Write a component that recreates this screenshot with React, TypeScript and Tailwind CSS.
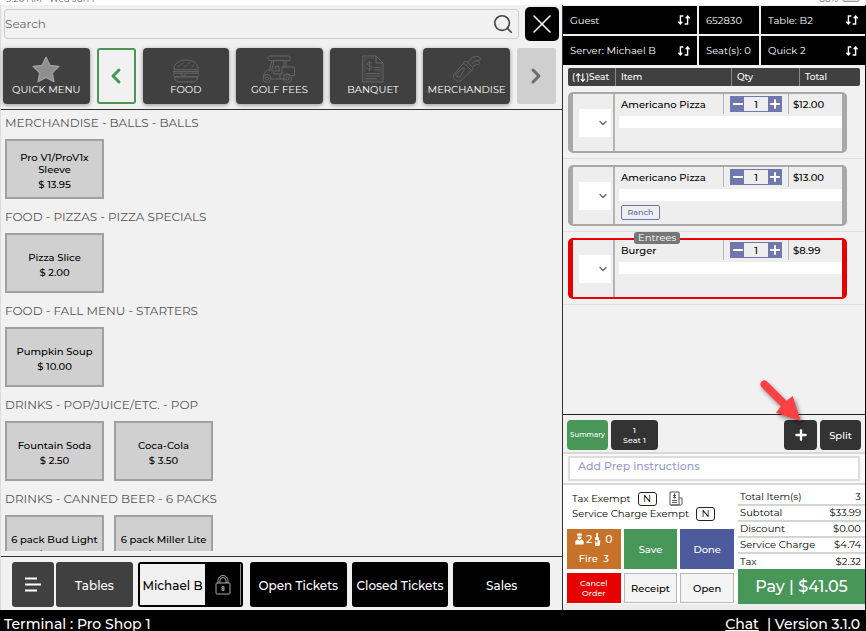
import type { ReactNode } from "react";
import { ArrowUpDown, ChevronDown, ChevronLeft, ChevronRight, Minus, Plus, Search, X } from "lucide-react";

/* ---------- icons ---------- */

function SwapIcon() {
  return (
    <svg viewBox="0 0 12 10" className="h-[10px] w-3 shrink-0" fill="none" stroke="currentColor" strokeWidth="1.4" aria-hidden="true">
      <path d="M5.4 1H2.4V9M.5 6.8l1.9 2.1 1.9-2.1M6.6 9h3V1M7.7 3.2l1.9-2.1 1.9 2.1" />
    </svg>
  );
}

function StarIcon() {
  return (
    <svg viewBox="0 0 28 27" className="h-[27px] w-7" aria-hidden="true">
      <path
        d="M14 1.2l3.8 8.2 9 1.1-6.6 6.2 1.7 8.9L14 21.3l-7.9 4.3 1.7-8.9L1.2 10.5l9-1.1z"
        fill="#8e8e8e"
        stroke="#a0a0a0"
        strokeWidth="1.4"
        strokeLinejoin="round"
      />
    </svg>
  );
}

function BurgerIcon() {
  return (
    <svg viewBox="0 0 28 24" className="h-6 w-7" fill="none" stroke="#646464" strokeWidth="1" strokeLinecap="round" strokeLinejoin="round" aria-hidden="true">
      <path d="M2 9.6C2 4.400 7 1 14 1s12 3.400 12 8.600c0 .7-.4 1-1 1H3c-.6 0-1-.3-1-1z" />
      <path d="M6.500 7.600l1.600-1.600M10 5.200l1.600-1.600M12.500 8l1.600-1.600M16 5.200l1.600-1.600M20 7.800l1.600-1.600" />
      <path d="M3 10.800c-2.200.6-2.200 3.200 0 3.400h22c2.200-.2 2.200-2.800 0-3.400M2.500 12.500h23" />
      <path d="M2.500 14.400c-1.800.8-1.400 3 .3 3.200h22.400c1.700-.2 2.100-2.400.3-3.200M8 14.400l3.500 2.800 3.500-2.800" />
      <path d="M2.500 18h23c.2 3-1.500 4.800-4.300 4.800H6.800c-2.800 0-4.500-1.800-4.300-4.800z" />
    </svg>
  );
}

function GolfCartIcon() {
  return (
    <svg viewBox="0 0 34 28" className="h-7 w-[34px]" fill="none" stroke="#646464" strokeWidth="1" strokeLinecap="round" strokeLinejoin="round" aria-hidden="true">
      <path d="M8 1h18c1.400 0 2 .8 2 2v2.500h-6M8 1C6.500 1 6 2 6 3.200S6.800 5.500 8 5.500h14" />
      <path d="M10 5.500L7.500 15M12 5.500L10 14M22 5.500v6.500M24 5.500v6.500" />
      <path d="M20 12h12.500v8.500h-3M20 12v7h-8l-1.500-4H7c-3.500.4-5 3-5.500 7M14 14l-1-2.500 3.500-.5M16.500 11l1 5h-5M9 24h14M18 19v5M21.500 20.500c1-2 5-2.500 7 0" />
      <circle cx="5" cy="23.500" r="4" />
      <circle cx="5" cy="23.500" r="1.600" />
      <circle cx="25.500" cy="23.500" r="4" />
      <circle cx="25.500" cy="23.500" r="1.600" />
    </svg>
  );
}

function InvoiceIcon() {
  return (
    <svg viewBox="0 0 22 28" className="h-7 w-[22px]" fill="none" stroke="#646464" strokeWidth="1" strokeLinecap="round" strokeLinejoin="round" aria-hidden="true">
      <path d="M1 1h13l7 7v19H1zM14 1v7h7" />
      <path d="M3 3h9M3 3v22h16V11" strokeOpacity="0.5" />
      <path d="M10 8c-3-1.600-5-.6-4.600 1.200.5 1.800 4.600 1.300 4.700 3.300.1 1.800-2.500 2.300-4.900 1M7.600 5.800v10M12.500 12.500h5M12.500 15h5M4.500 18.500h13M4.500 21h13M4.500 23.500h10" />
    </svg>
  );
}

function GolfBagIcon() {
  return (
    <svg viewBox="0 0 30 28" className="h-7 w-[30px]" fill="none" stroke="#646464" strokeWidth="1" strokeLinecap="round" strokeLinejoin="round" aria-hidden="true">
      <path d="M12 8.500l7.500 7L9 25.500c-1.200 1.200-3.400 1.200-5 0l-2-2c-1-1.400-1-3 0-4.400z" />
      <path d="M11 7.500c1-1.500 3-1.500 4.500-.2l4.500 4.200c1.400 1.400 1.200 3-.2 4M5 18l6-5.500 1.500 1.500-5 8.500-3.500-2z" />
      <path d="M16 7.500l3-3.500c.3-1.800 1.800-2.600 3.200-1.800M20.500 8.500l2-2.300M22 2.500c1.500-1.500 4-1.500 5-.5 1.500.6 1.600 2.400.4 3.200-1.400 1-3.400.4-4.900 1M21.500 11l3-1.500c1.500.6 3-.4 3-1.800 0-1-.8-1.500-1.500-1.700" />
    </svg>
  );
}

function MenuIcon() {
  return (
    <svg viewBox="0 0 16 15" className="h-[15px] w-4" stroke="#fff" strokeWidth="1.800" aria-hidden="true">
      <path d="M0 1.500h12M0 7.500h16M0 13.500h12" />
    </svg>
  );
}

function LockIcon() {
  return (
    <svg viewBox="0 0 16 20" className="h-5 w-4" fill="none" stroke="#a8a8a8" strokeWidth="1" aria-hidden="true">
      <rect x="1" y="8" width="14" height="11" rx="1" />
      <path d="M3 8V5.500a5 5 0 0110 0V8M5 8V5.500a3 3 0 016 0V8M7 11.500h2v4H7zM7 13.500h2" />
    </svg>
  );
}

function ReceiptIcon() {
  return (
    <svg viewBox="0 0 14 15" className="h-[15px] w-[14px]" fill="none" stroke="#555" strokeWidth="1" aria-hidden="true">
      <path d="M1 1h9v13H1zM10 7h3v6c0 1-1 1-1.500 1H2M5.500 2.500v5M4 4.500h3M4 6.500h3M3 9.500h5M3 11.500h5" />
    </svg>
  );
}

function ChefIcon() {
  return (
    <svg viewBox="0 0 9 12" className="h-3 w-[9px]" fill="#fff" aria-hidden="true">
      <path d="M2 .8Q4.500-.4 7 .8L6.700 2.800H2.300zM2.500 3.400h4v1.200a2 2 0 01-4 0zM.3 11.600V9c0-1.600 1-2.200 2.400-2.400l1.800 1.200 1.800-1.200C7.700 6.800 8.700 7.400 8.700 9v2.600z" />
    </svg>
  );
}

function BottleIcon() {
  return (
    <svg viewBox="0 0 7 13" className="h-[13px] w-[7px]" aria-hidden="true">
      <path d="M2.200 0h1.800v3.500l1 1.500v8H1V5l1.200-1.500z" fill="#fff" />
      <path d="M4 7.500h2.500L6 10.500v2h-1.500z" fill="#fff" />
      <path d="M1.500 7h2v2.500h-2z" fill="#c77129" />
    </svg>
  );
}

function PointerArrow() {
  return (
    <svg
      viewBox="0 0 50 50"
      className="pointer-events-none absolute -top-[42px] -left-[26px] z-10 h-[50px] w-[50px] drop-shadow-[2px_3px_2px_rgba(0,0,0,0.45)]"
      aria-hidden="true"
    >
      <path d="M3.200 8.800a4 4 0 015.600-5.600L28.500 22.700 34.700 18 42.700 43 18 34.700l4.900-6.400z" fill="#fb4143" />
    </svg>
  );
}

/* ---------- data ---------- */

const categories: { label: string; icon: ReactNode }[] = [
  { label: "FOOD", icon: <BurgerIcon /> },
  { label: "GOLF FEES", icon: <GolfCartIcon /> },
  { label: "BANQUET", icon: <InvoiceIcon /> },
  { label: "MERCHANDISE", icon: <GolfBagIcon /> },
];

const sections = [
  { title: "MERCHANDISE - BALLS - BALLS", items: [{ name: "Pro V1/ProV1x Sleeve", price: "$ 13.95" }] },
  { title: "FOOD - PIZZAS - PIZZA SPECIALS", items: [{ name: "Pizza Slice", price: "$ 2.00" }] },
  { title: "FOOD - FALL MENU - STARTERS", items: [{ name: "Pumpkin Soup", price: "$ 10.00" }] },
  {
    title: "DRINKS - POP/JUICE/ETC. - POP",
    items: [
      { name: "Fountain Soda", price: "$ 2.50" },
      { name: "Coca-Cola", price: "$ 3.50" },
    ],
  },
  {
    title: "DRINKS - CANNED BEER - 6 PACKS",
    items: [
      { name: "6 pack Bud Light", price: "$ 31.50" },
      { name: "6 pack Miller Lite", price: "$ 31.50" },
    ],
  },
];

type Line = { name: string; total: string; modifier?: string; course?: string; selected?: boolean };

const lines: Line[] = [
  { name: "Americano Pizza", total: "$12.00" },
  { name: "Americano Pizza", total: "$13.00", modifier: "Ranch" },
  { name: "Burger", total: "$8.99", course: "Entrees", selected: true },
];

const totals = [
  ["Total Item(s)", "3"],
  ["Subtotal", "$33.99"],
  ["Discount", "$0.00"],
  ["Service Charge", "$4.74"],
  ["Tax", "$2.32"],
];

/* ---------- left side ---------- */

function CategoryButton({ label, icon }: { label: string; icon: ReactNode }) {
  return (
    <button className="flex min-w-0 flex-1 flex-col items-center justify-end rounded-[4px] bg-[#404040] pb-[7px] text-[10px] leading-[14px] text-white shadow-[0_1px_4px_rgba(0,0,0,0.4)]">
      {icon}
      {label}
    </button>
  );
}

function ProductButton({ name, price }: { name: string; price: string }) {
  return (
    <button className="flex h-[60px] w-[99px] flex-col items-center justify-center gap-[3px] border-2 border-[#a0a0a0] bg-[#d0d0d0] pt-1 text-[10px] leading-3 font-medium text-black">
      <span className="max-w-[90px]">{name}</span>
      <span>{price}</span>
    </button>
  );
}

function Catalog() {
  return (
    <main className="flex min-w-0 flex-1 flex-col border-l border-[#dcdcdc] bg-[#f1f1f1]">
      <div className="border-b border-[#333] pb-[5px]">
        <div className="flex items-center gap-[6px] pt-[2px] pr-[3px] pl-[3px]">
          <label className="flex h-[30px] min-w-0 flex-1 items-center rounded-[3px] border border-[#cfcfcf] pr-1">
            <input
              type="text"
              aria-label="Search"
              placeholder="Search"
              className="min-w-0 flex-1 bg-transparent text-[12px] outline-none placeholder:text-[#6a6a6a]"
            />
            <Search className="h-[22px] w-[22px] text-[#444]" strokeWidth={1.8} />
          </label>
          <button aria-label="Close" className="flex h-[34px] w-[34px] items-center justify-center rounded-[5px] bg-black text-white">
            <X className="h-8 w-8" strokeWidth={1.2} />
          </button>
        </div>
        <nav aria-label="Categories" className="mt-[7px] flex h-14 gap-[7px] pr-[6px] pl-[2px]">
          <CategoryButton label="QUICK MENU" icon={<StarIcon />} />
          <button
            aria-label="Previous categories"
            className="flex w-[39px] items-center justify-center rounded-[3px] border-2 border-[#489658] text-[#489658]"
          >
            <ChevronLeft className="h-6 w-6" strokeWidth={3} />
          </button>
          {categories.map((c) => (
            <CategoryButton key={c.label} label={c.label} icon={c.icon} />
          ))}
          <button aria-label="Next categories" className="flex w-[39px] items-center justify-center rounded-[2px] bg-[#cfcfcf] text-[#6c6c6c]">
            <ChevronRight className="h-6 w-6" strokeWidth={3} />
          </button>
        </nav>
      </div>

      <div className="mb-[5px] min-h-0 flex-1 overflow-hidden pl-1">
        {sections.map((s) => (
          <section key={s.title} className="pb-[5px]">
            <h2 className="mb-[3px] text-[12px] leading-[26px] text-[#555]">{s.title}</h2>
            <div className="flex flex-wrap gap-[10px]">
              {s.items.map((i) => (
                <ProductButton key={i.name} name={i.name} price={i.price} />
              ))}
            </div>
          </section>
        ))}
      </div>

      <nav
        aria-label="Terminal"
        className="flex h-[54px] shrink-0 items-center gap-[5px] border-t border-[#333] pt-[2px] pr-3 pl-[11px] text-[12px] font-medium text-white"
      >
        <div className="flex gap-[2px]">
          <button aria-label="Menu" className="flex h-[45px] w-[42px] items-center justify-center rounded-[3px] bg-[#404040]">
            <MenuIcon />
          </button>
          <button className="h-[45px] w-[77px] rounded-[3px] bg-[#404040] pt-[2px]">Tables</button>
        </div>
        <button className="mr-[2px] flex h-[45px] w-[105px] items-stretch rounded-[3px] border-2 border-black bg-black">
          <span className="flex flex-1 items-center justify-center bg-[#f1f1f1] pt-[2px] whitespace-nowrap text-black">Michael B</span>
          <span className="flex w-9 items-center justify-center border-r border-[#888]">
            <LockIcon />
          </span>
        </button>
        <button className="h-[45px] min-w-0 flex-1 rounded-[3px] bg-black pt-[2px] whitespace-nowrap">Open Tickets</button>
        <button className="h-[45px] min-w-0 flex-1 rounded-[3px] bg-black pt-[2px] whitespace-nowrap">Closed Tickets</button>
        <button className="h-[45px] min-w-0 flex-1 rounded-[3px] bg-black pt-[2px]">Sales</button>
      </nav>
    </main>
  );
}

/* ---------- right side ---------- */

function InfoCell({ label, swap }: { label: string; swap?: boolean }) {
  return (
    <button className="flex items-center justify-between bg-black px-[7px] text-left text-[10px] whitespace-nowrap text-white">
      {label}
      {swap && <SwapIcon />}
    </button>
  );
}

function LineRow({ line }: { line: Line }) {
  const tone = line.selected ? "border-[#e60000]" : "border-[#a8a8a8]";
  return (
    <tr className="relative block border-b border-[#dedede] pt-[6px] pr-[18px] pb-[5px] pl-[5px]">
      <td className="block p-0">
        {line.course && (
          <span className="absolute top-0 left-[71px] rounded-[3px] bg-[#767676] px-1 text-[10px] leading-3 text-white">{line.course}</span>
        )}
        <div className={`grid h-[61px] grid-cols-[42px_minmax(0,1fr)_65px_54px] rounded-[5px] border-x-[5px] border-y-2 bg-[#eee] ${tone}`}>
          <div className="flex items-center border-r-2 border-[#b4b4b4] pl-[6px]">
            <label className="relative flex h-7 w-8 items-center">
              <select aria-label={`Seat for ${line.name}`} className="h-7 w-8 appearance-none bg-white">
                <option aria-label="No seat"></option>
              </select>
              <ChevronDown className="pointer-events-none absolute right-[2px] h-3 w-3 text-[#666]" strokeWidth={2.5} />
            </label>
          </div>
          <div className="col-span-3 flex flex-col">
            <div className="grid h-5 grid-cols-[minmax(0,1fr)_65px_54px] items-center text-[10px] font-medium text-black">
              <span className="pl-[6px]">{line.name}</span>
              <span className="flex h-5 items-center border-l border-[#b4b4b4] pl-[6px]">
                <span className="flex h-4 w-[52px] border border-[#7077ad] bg-[#eee]">
                  <button aria-label="Decrease quantity" className="flex w-[13px] items-center justify-center bg-[#7077ad] text-white">
                    <Minus className="h-[14px] w-[14px] shrink-0" strokeWidth={3.5} />
                  </button>
                  <span className="flex-1 text-center leading-4">1</span>
                  <button aria-label="Increase quantity" className="flex w-[13px] items-center justify-center bg-[#7077ad] text-white">
                    <Plus className="h-[14px] w-[14px] shrink-0" strokeWidth={3.5} />
                  </button>
                </span>
              </span>
              <span className="flex h-5 items-center border-l border-[#b4b4b4] pl-1">{line.total}</span>
            </div>
            <input aria-label={`Note for ${line.name}`} className="mt-[2px] ml-1 h-3 bg-white outline-none" />
            {line.modifier && (
              <button className="mt-1 ml-[6px] h-[15px] w-[39px] rounded-[2px] border border-[#7077ad] text-[8px] leading-[13px] font-medium text-[#6068a5]">
                {line.modifier}
              </button>
            )}
          </div>
        </div>
      </td>
    </tr>
  );
}

function ExemptRow({ id, label, children }: { id: string; label: string; children?: ReactNode }) {
  return (
    <div className="flex h-[15px] items-center gap-[7px] text-[10px] whitespace-nowrap text-black">
      <label htmlFor={id}>{label}</label>
      <button id={id} className="h-[14px] w-[19px] rounded-[3px] border border-[#222] leading-3">
        N
      </button>
      {children}
    </div>
  );
}

function Ticket() {
  return (
    <aside className="flex w-[304px] shrink-0 flex-col border-r border-l border-[#333] border-r-black bg-[#f1f1f1]">
      <div className="grid grid-cols-[134px_60px_minmax(0,1fr)] grid-rows-[28px_29px] gap-x-[2px] gap-y-[2px] pt-px">
        <InfoCell label="Guest" swap />
        <InfoCell label="652830" />
        <InfoCell label="Table: B2" swap />
        <InfoCell label="Server: Michael B" swap />
        <InfoCell label="Seat(s): 0" />
        <InfoCell label="Quick 2" swap />
      </div>

      <table className="mt-[3px] block min-h-0 flex-1">
        <thead className="block px-[5px]">
          <tr className="grid h-[18px] grid-cols-[47px_116px_68px_minmax(0,1fr)] items-center rounded-[2px] bg-[#404040] text-left text-[9px] leading-[18px] text-white">
            <th className="flex items-center pl-1 font-medium">
              (<ArrowUpDown className="h-[11px] w-[11px]" strokeWidth={2.5} />)Seat
            </th>
            <th className="border-l border-[#8a8a8a] pl-[5px] font-medium">Item</th>
            <th className="border-l border-[#8a8a8a] pl-[5px] font-medium">Qty</th>
            <th className="border-l border-[#8a8a8a] pl-[5px] font-medium">Total</th>
          </tr>
        </thead>
        <tbody className="block">
          {lines.map((l, i) => (
            <LineRow key={i} line={l} />
          ))}
        </tbody>
      </table>

      <div className="flex h-[38px] shrink-0 items-end gap-[3px] border-t border-[#222] pr-1 pb-[2px] pl-1 text-white">
        <button className="h-[30px] w-[41px] rounded-[4px] bg-[#489658] text-[7px] font-medium">Summary</button>
        <button className="h-[30px] w-[47px] rounded-[4px] bg-[#333] text-[8px] leading-[10px] font-medium">
          1<br />
          Seat 1
        </button>
        <span className="relative ml-auto flex">
          <button aria-label="Add seat" className="flex h-[30px] w-[33px] items-center justify-center rounded-[4px] bg-[#333]">
            <Plus className="h-4 w-4" strokeWidth={3.5} />
          </button>
          <PointerArrow />
        </span>
        <button className="h-[30px] w-[41px] rounded-[4px] bg-[#333] text-[10px] font-medium">Split</button>
      </div>

      <div className="border-y-2 border-[#d8d8d8] bg-[#f8f8f8] px-[5px] py-[2px]">
        <input
          type="text"
          aria-label="Add Prep instructions"
          placeholder="Add Prep instructions"
          className="block h-[25px] w-full border-2 border-[#ddd] bg-white px-2 pb-[6px] text-[11px] font-medium outline-none placeholder:text-[#989dca]"
        />
      </div>

      <div className="flex bg-white">
        <div className="flex min-w-0 flex-1 flex-col px-1 pt-[6px]">
          <div className="pl-[5px]">
            <ExemptRow id="tax-exempt" label="Tax Exempt">
              <button aria-label="Tax details" className="ml-[5px]">
                <ReceiptIcon />
              </button>
            </ExemptRow>
            <ExemptRow id="service-exempt" label="Service Charge Exempt" />
          </div>
          <div className="mt-2 grid grid-cols-3 grid-rows-[40px_30px] gap-x-[3px] gap-y-1 text-[10px] font-medium text-white">
            <button className="bg-[#c77129]">
              <span className="flex items-center justify-center gap-[2px] text-[11px] leading-5">
                <ChefIcon />2<BottleIcon />
                <span className="pl-[2px]">0</span>
              </span>
              <span className="block leading-5 whitespace-pre">Fire  3</span>
            </button>
            <button className="bg-[#489658]">Save</button>
            <button className="bg-[#4d5a9b]">Done</button>
            <button className="bg-[#e60000] text-[8px] leading-[10px]">
              Cancel
              <br />
              Order
            </button>
            <button className="border border-[#b8b8b8] bg-[#f4f4f4] text-black">Receipt</button>
            <button className="border border-[#b8b8b8] bg-[#f4f4f4] text-black">Open</button>
          </div>
        </div>
        <div className="flex w-[127px] flex-col pt-1">
          <table className="w-full text-[10px] leading-[14px] text-black">
            <tbody>
              {totals.map(([label, value]) => (
                <tr key={label} className="h-4 border-b-2 border-[#d4d4d4] last:border-b-0">
                  <th className="p-0 pl-[2px] text-left font-normal">{label}</th>
                  <td className="p-0 pr-1 text-right">{value}</td>
                </tr>
              ))}
            </tbody>
          </table>
          <button className="h-[35px] bg-[#489658] text-[16px] font-medium text-white">Pay | $41.05</button>
        </div>
      </div>
      <div className="h-[6px] shrink-0 bg-[#ececec]" />
    </aside>
  );
}

export default function App() {
  return (
    <div className="flex h-screen flex-col overflow-hidden bg-white font-[Montserrat,Inter,'Liberation_Sans',sans-serif]">
      <header className="flex h-[5px] shrink-0 items-end justify-between overflow-hidden pr-[6px] pl-[6px] text-[9px] leading-[12px] text-[#666]">
        <span className="whitespace-pre">9:20 AM   Wed Jun 1</span>
        <span className="flex items-end gap-1">
          88%
          <span className="mb-[3px] h-2 w-[18px] rounded-[3px] border border-[#999] bg-[#ddd]" />
        </span>
      </header>
      <div className="flex min-h-0 flex-1">
        <Catalog />
        <Ticket />
      </div>
      <footer className="flex h-[21px] shrink-0 items-center justify-between bg-black pt-[6px] pr-[6px] pl-1 text-[14px] leading-5 font-medium text-white">
        <span>Terminal : Pro Shop 1</span>
        <span>
          <a href="#chat" className="mr-2 underline underline-offset-1">
            Chat
          </a>
          | Version 3.1.0
        </span>
      </footer>
    </div>
  );
}
